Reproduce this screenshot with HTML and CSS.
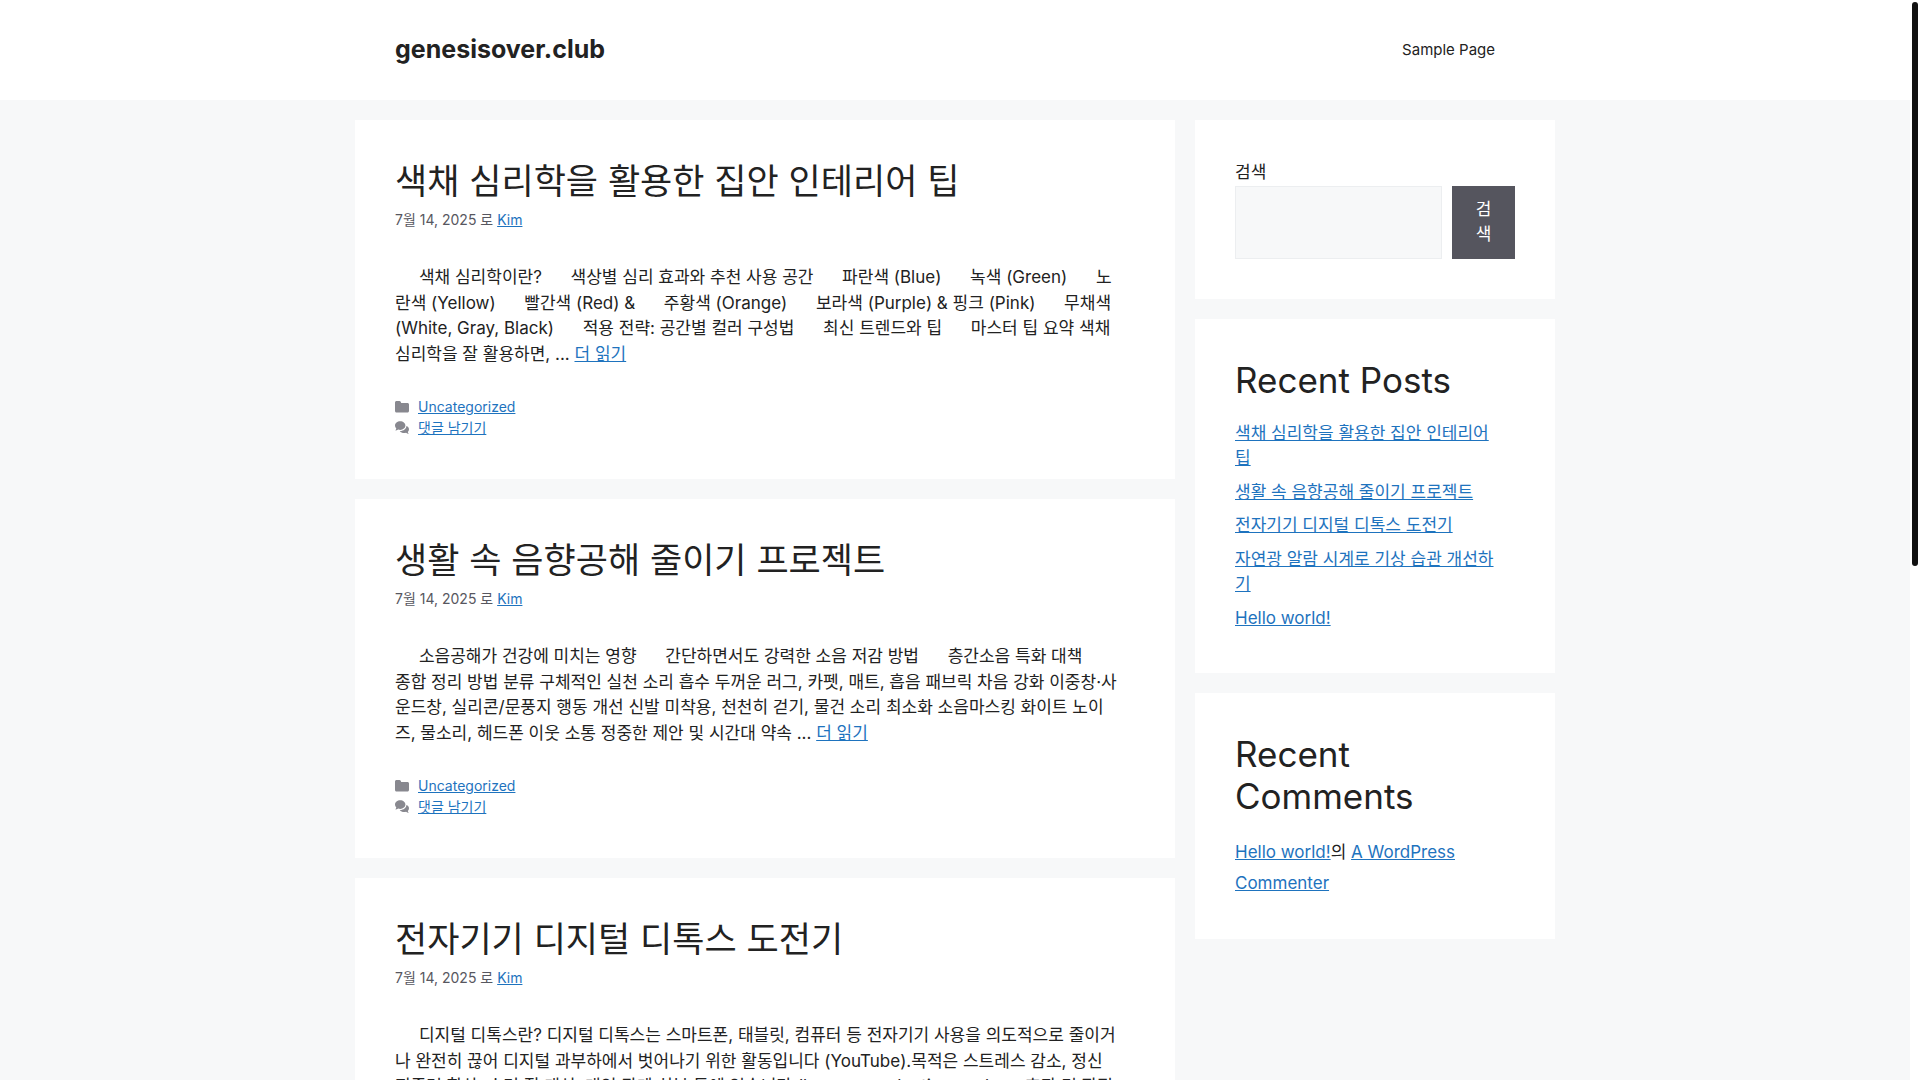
FILE: index.html
```html
<!DOCTYPE html>
<html lang="ko">
<head>
    <meta charset="UTF-8">
    <meta name="viewport" content="width=device-width, initial-scale=1">
    <title>genesisover.club</title>
    <link rel="stylesheet" href="styles.css">
</head>
<body>
    <svg class="icon-defs" aria-hidden="true">
        <symbol id="icon-folder" viewBox="0 0 14 14">
            <path d="M0 2.500C0 1.700.7 1 1.500 1h3c.5 0 1 .3 1.200.8L6.200 3h6.300c.8 0 1.500.7 1.500 1.500v6.500c0 .8-.7 1.500-1.500 1.500h-11C.7 12.500 0 11.800 0 11z"/>
        </symbol>
        <symbol id="icon-comments" viewBox="0 0 14 14">
            <path d="M5.200.3C2.300.3 0 2.200 0 4.600c0 1.100.5 2.100 1.300 2.900C1.200 8.300.8 9 .3 9.500c1.100 0 2.100-.4 2.900-.9.600.2 1.300.3 2 .3 2.900 0 5.200-1.900 5.200-4.300S8.100.3 5.200.3z"/>
            <path d="M11.400 4.900c-.1 2.800-2.800 5-6.200 5h-.4c.9 1.400 2.500 2.200 4.300 2.200.7 0 1.300-.1 1.900-.3.8.6 1.700 1 2.800 1.100-.5-.5-.9-1.300-1-2 .8-.8 1.200-1.700 1.200-2.700 0-1.400-1-2.700-2.600-3.300z"/>
        </symbol>
    </svg>

    <header class="site-header">
        <div class="inside-header">
            <a class="site-title" href="#">genesisover.club</a>
            <nav class="main-nav">
                <a href="#">Sample Page</a>
            </nav>
        </div>
    </header>

    <div class="site-content">
        <main class="posts">
            <article class="box">
                <h2 class="entry-title"><a href="#">색채 심리학을 활용한 집안 인테리어 팁</a></h2>
                <div class="entry-meta">7월 14, 2025 로 <a href="#">Kim</a></div>
                <p class="entry-summary">&nbsp; &nbsp; &nbsp;색채 심리학이란? &nbsp; &nbsp; &nbsp;색상별 심리 효과와 추천 사용 공간 &nbsp; &nbsp; &nbsp;파란색 (Blue) &nbsp; &nbsp; &nbsp;녹색 (Green) &nbsp; &nbsp; &nbsp;노<br>란색 (Yellow) &nbsp; &nbsp; &nbsp;빨간색 (Red) &amp; &nbsp; &nbsp; &nbsp;주황색 (Orange) &nbsp; &nbsp; &nbsp;보라색 (Purple) &amp; 핑크 (Pink) &nbsp; &nbsp; &nbsp;무채색<br>(White, Gray, Black) &nbsp; &nbsp; &nbsp;적용 전략: 공간별 컬러 구성법 &nbsp; &nbsp; &nbsp;최신 트렌드와 팁 &nbsp; &nbsp; &nbsp;마스터 팁 요약 색채<br>심리학을 잘 활용하면, ... <a href="#">더 읽기</a></p>
                <footer class="entry-footer">
                    <span><svg class="icon"><use href="#icon-folder"/></svg><a href="#">Uncategorized</a></span>
                    <span><svg class="icon"><use href="#icon-comments"/></svg><a href="#">댓글 남기기</a></span>
                </footer>
            </article>

            <article class="box">
                <h2 class="entry-title"><a href="#">생활 속 음향공해 줄이기 프로젝트</a></h2>
                <div class="entry-meta">7월 14, 2025 로 <a href="#">Kim</a></div>
                <p class="entry-summary">&nbsp; &nbsp; &nbsp;소음공해가 건강에 미치는 영향 &nbsp; &nbsp; &nbsp;간단하면서도 강력한 소음 저감 방법 &nbsp; &nbsp; &nbsp;층간소음 특화 대책<br>종합 정리 방법 분류 구체적인 실천 소리 흡수 두꺼운 러그, 카펫, 매트, 흡음 패브릭 차음 강화 이중창·사<br>운드창, 실리콘/문풍지 행동 개선 신발 미착용, 천천히 걷기, 물건 소리 최소화 소음마스킹 화이트 노이<br>즈, 물소리, 헤드폰 이웃 소통 정중한 제안 및 시간대 약속 ... <a href="#">더 읽기</a></p>
                <footer class="entry-footer">
                    <span><svg class="icon"><use href="#icon-folder"/></svg><a href="#">Uncategorized</a></span>
                    <span><svg class="icon"><use href="#icon-comments"/></svg><a href="#">댓글 남기기</a></span>
                </footer>
            </article>

            <article class="box">
                <h2 class="entry-title"><a href="#">전자기기 디지털 디톡스 도전기</a></h2>
                <div class="entry-meta">7월 14, 2025 로 <a href="#">Kim</a></div>
                <p class="entry-summary">&nbsp; &nbsp; &nbsp;디지털 디톡스란? 디지털 디톡스는 스마트폰, 태블릿, 컴퓨터 등 전자기기 사용을 의도적으로 줄이거<br>나 완전히 끊어 디지털 과부하에서 벗어나기 위한 활동입니다 (YouTube).목적은 스트레스 감소, 정신<br>집중력 향상, 수면 질 개선, 대인 관계 회복 등에 있습니다 (bemoreproductive.app). &nbsp; &nbsp; &nbsp;효과 및 장점 &nbsp; &nbsp; &nbsp;주<br>요 효과 ... <a href="#">더 읽기</a></p>
                <footer class="entry-footer">
                    <span><svg class="icon"><use href="#icon-folder"/></svg><a href="#">Uncategorized</a></span>
                    <span><svg class="icon"><use href="#icon-comments"/></svg><a href="#">댓글 남기기</a></span>
                </footer>
            </article>
        </main>

        <aside class="sidebar">
            <section class="box">
                <form class="search-form">
                    <label for="search">검색</label>
                    <div class="search-row">
                        <input type="search" id="search">
                        <button type="submit">검색</button>
                    </div>
                </form>
            </section>

            <section class="box">
                <h2 class="widget-title">Recent Posts</h2>
                <ul class="recent-posts">
                    <li><a href="#">색채 심리학을 활용한 집안 인테리어 팁</a></li>
                    <li><a href="#">생활 속 음향공해 줄이기 프로젝트</a></li>
                    <li><a href="#">전자기기 디지털 디톡스 도전기</a></li>
                    <li><a href="#">자연광 알람 시계로 기상 습관 개선하기</a></li>
                    <li><a href="#">Hello world!</a></li>
                </ul>
            </section>

            <section class="box">
                <h2 class="widget-title">Recent Comments</h2>
                <ol class="recent-comments">
                    <li><a href="#">Hello world!</a>의 <a href="#">A WordPress Commenter</a></li>
                </ol>
            </section>
        </aside>
    </div>

    <div class="scroll-track"><div class="scroll-thumb"></div></div>
</body>
</html>
```

FILE: styles.css
```css
* {
    box-sizing: border-box;
}
html {
    scrollbar-width: none;
}
body {
    margin: 0;
    padding-right: 10px;
    background-color: #f7f8f9;
    color: #222;
    font-family: Inter, "Noto Sans CJK KR", sans-serif;
    font-size: 17px;
    line-height: 1.5;
}
h2, p, ul, ol {
    margin: 0;
    padding: 0;
}
h2 {
    font-size: 35px;
    font-weight: 400;
    line-height: 42px;
}
ul, ol {
    list-style: none;
}
a {
    color: #1e73be;
}

/* header */
.site-header {
    background-color: #fff;
}
.inside-header {
    display: flex;
    align-items: center;
    justify-content: space-between;
    max-width: 1200px;
    margin: 0 auto;
    padding: 20px 40px;
}
.site-title {
    color: #222;
    font-size: 25px;
    font-weight: 700;
    text-decoration: none;
}
.main-nav a {
    display: block;
    padding: 0 20px;
    color: #222;
    font-size: 15px;
    line-height: 60px;
    text-decoration: none;
}

/* layout */
.site-content {
    display: grid;
    grid-template-columns: 1fr 360px;
    gap: 20px;
    max-width: 1200px;
    margin: 20px auto;
}
.posts, .sidebar {
    display: flex;
    flex-direction: column;
    gap: 20px;
}
.box {
    padding: 40px;
    background-color: #fff;
}

/* posts */
.entry-title a {
    color: #222;
    text-decoration: none;
}
.entry-meta {
    margin-top: 7px;
    color: #575760;
    font-size: 14px;
}
.entry-summary {
    margin-top: 35px;
}
.entry-footer {
    display: flex;
    flex-direction: column;
    margin-top: 29px;
    padding-bottom: 1px;
    font-size: 14px;
}
.icon-defs {
    display: none;
}
.icon {
    width: 14px;
    height: 14px;
    margin-right: 9px;
    vertical-align: -2px;
    fill: #88888f;
}

/* sidebar */
.search-form label {
    display: block;
}
.search-row {
    display: flex;
    gap: 10px;
}
.search-row input {
    flex: 1;
    min-width: 0;
    padding: 10px 15px;
    border: 1px solid #eceef0;
    background-color: #f7f8f9;
    font: inherit;
}
.search-row button {
    width: 63px;
    padding: 10px 20px;
    border: 1px solid #55555e;
    background-color: #55555e;
    color: #fff;
    font: inherit;
}
.widget-title {
    margin-bottom: 20px;
}
.recent-posts {
    padding: 0 10px 2px 0;
}
.recent-posts li {
    margin-bottom: 8px;
}
.recent-posts li:last-child {
    margin-bottom: 0;
}
.recent-comments {
    line-height: 31px;
}

/* scrollbar */
.scroll-track {
    position: fixed;
    top: 0;
    right: 0;
    bottom: 0;
    width: 10px;
    padding: 2px;
    background-color: #fff;
}
.scroll-thumb {
    width: 6px;
    height: 564px;
    border-radius: 3px;
    background-color: #111;
}
```
